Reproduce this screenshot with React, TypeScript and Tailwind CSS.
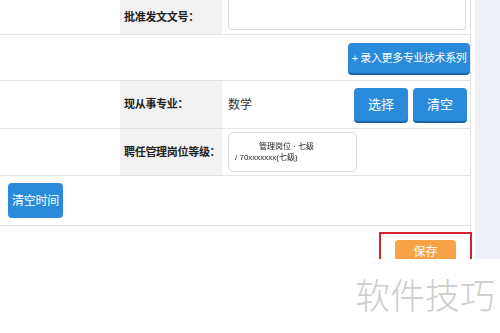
import React from "react"

const font = { fontFamily: '"Liberation Sans", "Noto Sans CJK SC", sans-serif' }

function BlueButton({ children, className = "" }: { children: React.ReactNode; className?: string }) {
  return (
    <button
      className={`flex items-center justify-center whitespace-nowrap rounded-[4px] bg-[#2a8bdb] text-white shadow-[0_2px_0_#1a64a8] ${className}`}
    >
      {children}
    </button>
  )
}

function Label({ children }: { children: React.ReactNode }) {
  return (
    <div className="flex w-[102px] shrink-0 items-center whitespace-nowrap bg-[#f2f2f2] pl-[4px] text-[11px] font-bold tracking-[-0.3px] text-[#222]">
      {children}
    </div>
  )
}

export default function App() {
  return (
    <div className="h-[333px] w-[500px] overflow-hidden bg-white" style={font}>
      <div className="flex h-[259px]">
        <div className="w-[475px] shrink-0 bg-white">
          <div className="mr-[4px] border-r border-[#e3e3e3]">
            {/* row 1 */}
            <div className="flex h-[35px] border-b border-[#e3e3e3]">
              <div className="w-[120px] shrink-0" />
              <Label>批准发文文号：</Label>
              <div className="flex flex-1 pl-[6px] pb-[4px]">
                <div className="h-full w-[238px] rounded-b-[4px] border border-t-0 border-[#dcdcdc] bg-white" />
              </div>
            </div>

            {/* row 2 */}
            <div className="flex h-[46px] items-start justify-end border-b border-[#e3e3e3] pt-[8px]">
              <BlueButton className="h-[30px] w-[122px] text-[11px] tracking-[-0.4px]">+ 录入更多专业技术系列</BlueButton>
            </div>

            {/* row 3 */}
            <div className="flex h-[48px] border-b border-[#e3e3e3]">
              <div className="w-[120px] shrink-0" />
              <Label>现从事专业：</Label>
              <div className="flex flex-1 items-center pl-[6px] text-[12px] text-[#333]">
                <span>数学</span>
                <div className="ml-auto mr-[3px] flex gap-[5px]">
                  <BlueButton className="h-[33px] w-[54px] text-[13px]">选择</BlueButton>
                  <BlueButton className="h-[33px] w-[54px] text-[13px]">清空</BlueButton>
                </div>
              </div>
            </div>

            {/* row 4 */}
            <div className="flex h-[47px] border-b border-[#e3e3e3]">
              <div className="w-[120px] shrink-0" />
              <Label>聘任管理岗位等级：</Label>
              <div className="flex flex-1 items-center pl-[6px]">
                <div className="flex h-[40px] w-[129px] items-center rounded-[5px] border border-[#dcdcdc] px-[6px]">
                  <div className="flex flex-col whitespace-nowrap text-[8px] leading-[11px] text-[#222] blur-[0.7px]">
                    <span className="pl-[24px]">管理岗位 · 七级</span>
                    <span>/ 70xxxxxxx(七级)</span>
                  </div>
                </div>
              </div>
            </div>

            {/* row 5 */}
            <div className="flex h-[50px] items-center border-b border-[#e3e3e3] pl-[8px]">
              <BlueButton className="h-[35px] w-[55px] text-[12px] tracking-[-0.3px] shadow-none">清空时间</BlueButton>
            </div>

            {/* row 6 */}
            <div className="flex h-[33px] justify-end pt-[6px]">
              <div className="-mr-[2px] flex h-[40px] w-[93px] justify-center border-2 border-[#d3232b] pt-[6px]">
                <button className="h-[24px] w-[61px] rounded-[4px] bg-[#f7a247] text-[12px] text-white">保存</button>
              </div>
            </div>
          </div>
        </div>
        <div className="flex-1 bg-[#eef0f5]" />
      </div>

      <div className="relative h-[74px] bg-white">
        <div
          className="absolute right-[5px] top-[17px] text-[35px] leading-none text-[#cdcdcd]"
          style={{ fontFamily: '"Noto Sans CJK SC", sans-serif', fontWeight: 300 }}
        >
          软件技巧
        </div>
      </div>
    </div>
  )
}
